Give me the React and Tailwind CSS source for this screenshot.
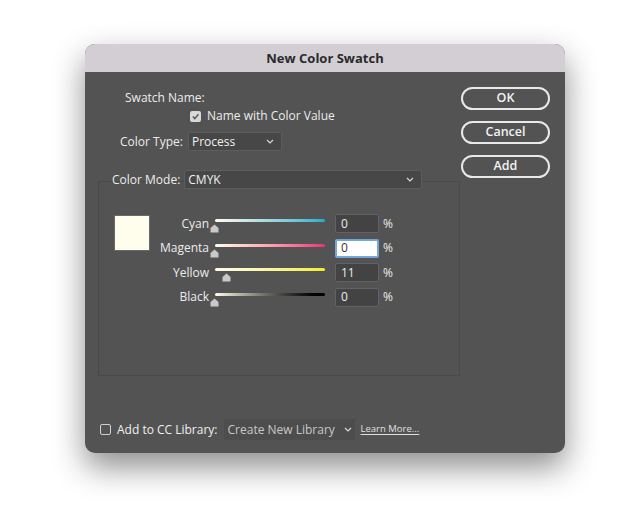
import React from "react";

const font = { fontFamily: '"Open Sans", "DejaVu Sans", sans-serif' };

function Chevron({ className = "" }) {
  return (
    <svg width="8" height="5" viewBox="0 0 8 5" className={className}>
      <path d="M1 1 L4 4 L7 1" fill="none" stroke="#d8d8d8" strokeWidth="1.2" />
    </svg>
  );
}

function Thumb({ left }) {
  return (
    <svg
      width="9"
      height="9"
      viewBox="0 0 9 9"
      className="absolute top-[10px]"
      style={{ left }}
    >
      <path d="M4.5 0.5 L8.5 4 L8.5 8.5 L0.5 8.5 L0.5 4 Z" fill="#c9c9c9" />
    </svg>
  );
}

function Row({ label, value, gradient, focused }) {
  const left = 1 + (value / 100) * 110;
  return (
    <div className="flex items-center h-[19px]">
      <div className="w-[60px] text-right text-[12px] text-[#ececec] leading-none">{label}</div>
      <div className="relative w-[120px] h-[19px]">
        <div className={`absolute left-[6px] top-[5px] w-[110px] h-[3px] rounded-full ${gradient}`} />
        <Thumb left={`${left}px`} />
      </div>
      <div
        className={
          focused
            ? "ml-[6px] w-[44px] h-[19px] bg-white border-2 border-[#74a6dc] rounded-[2px] flex items-center pl-[4px] text-[12px] text-[#333]"
            : "ml-[6px] w-[44px] h-[19px] bg-[#434343] border border-[#626262] rounded-[2px] flex items-center pl-[5px] text-[12px] text-[#ececec]"
        }
      >
        {value}
      </div>
      <div className="ml-[4px] text-[12px] text-[#ececec]">%</div>
    </div>
  );
}

export default function App() {
  return (
    <div className="w-[630px] h-[506px] bg-white relative overflow-hidden" style={font}>
      <div className="pt-[44px] pl-[85px]">
        <div className="w-[480px] h-[409px] rounded-[10px] overflow-hidden bg-[#535353] shadow-[0_14px_32px_rgba(0,0,0,0.45)] flex flex-col">
          <div className="h-[28px] pt-[1px] bg-[#d3ced4] flex items-center justify-center text-[13px] font-bold text-[#2a2a2a]">
            New Color Swatch
          </div>
          <div className="flex-1 flex flex-col">
            <div className="flex">
              <div className="w-[362px] ml-[13px]">
                <div className="mt-[18px] pl-[27px] text-[12px] leading-[16px] text-[#ececec]">Swatch Name:</div>
                <div className="mt-[2px] pl-[92px] flex items-center h-[16px]">
                  <div className="w-[11px] h-[11px] rounded-[2px] bg-[#d9d9d9] flex items-center justify-center">
                    <svg width="9" height="9" viewBox="0 0 9 9">
                      <path d="M1.8 4.6 L3.8 6.6 L7.4 2.2" fill="none" stroke="#555" strokeWidth="1.4" />
                    </svg>
                  </div>
                  <span className="ml-[6px] text-[12px] text-[#ececec]">Name with Color Value</span>
                </div>
                <div className="mt-[8px] pl-[22px] flex items-center h-[19px]">
                  <span className="text-[12px] text-[#ececec]">Color Type:</span>
                  <div className="ml-[5px] w-[94px] h-[19px] bg-[#474747] border border-[#5d5d5d] rounded-[2px] flex items-center justify-between px-[3px]">
                    <span className="text-[12px] text-[#f0f0f0]">Process</span>
                    <Chevron className="mr-[4px]" />
                  </div>
                </div>
                <div className="mt-[30px] h-[195px] border border-[#4a4a4a]">
                  <div className="-mt-[12px] flex items-center h-[19px] pl-[13px]">
                    <span className="text-[12px] text-[#ececec]">Color Mode:</span>
                    <div className="ml-[4px] w-[238px] h-[19px] bg-[#474747] border border-[#5d5d5d] rounded-[2px] flex items-center justify-between px-[3px]">
                      <span className="text-[12px] text-[#f0f0f0]">CMYK</span>
                      <Chevron className="mr-[4px]" />
                    </div>
                  </div>
                  <div className="flex mt-[25px] pl-[15px]">
                    <div className="w-[36px] h-[36px] mt-[1px] bg-[#fffdec] border border-[#6a6a6a]" />
                    <div className="-ml-[1px] flex flex-col gap-[5.5px]">
                      <Row label="Cyan" value={0} gradient="bg-gradient-to-r from-[#fffdec] to-[#17aed0]" />
                      <Row label="Magenta" value={0} focused gradient="bg-gradient-to-r from-[#fffdec] to-[#e62e7c]" />
                      <Row label="Yellow" value={11} gradient="bg-gradient-to-r from-[#fffdec] to-[#f3ec15]" />
                      <Row label="Black" value={0} gradient="bg-gradient-to-r from-[#fffdec] to-[#000000]" />
                    </div>
                  </div>
                </div>
              </div>
              <div className="ml-[1px] mt-[15px] flex flex-col gap-[11px]">
                {["OK", "Cancel", "Add"].map((t) => (
                  <div
                    key={t}
                    className="w-[89px] h-[23px] rounded-full border-2 border-[#e9e9e9] flex items-center justify-center text-[12.5px] font-semibold text-[#f2f2f2]"
                  >
                    {t}
                  </div>
                ))}
              </div>
            </div>
            <div className="mt-auto mb-[13px] ml-[15px] flex items-center h-[21px]">
              <div className="w-[11px] h-[11px] rounded-[2px] border border-[#cfcfcf]" />
              <span className="ml-[6px] text-[12px] text-[#f0f0f0]">Add to CC Library:</span>
              <div className="ml-[6px] w-[131px] h-[21px] bg-[#4d4d4d] flex items-center justify-between pl-[4px] pr-[3px]">
                <span className="text-[12px] text-[#c8c8c8]">Create New Library</span>
                <Chevron />
              </div>
              <span className="ml-[6px] text-[9.5px] text-[#e0e0e0] underline underline-offset-2">Learn More...</span>
            </div>
          </div>
        </div>
      </div>
    </div>
  );
}
